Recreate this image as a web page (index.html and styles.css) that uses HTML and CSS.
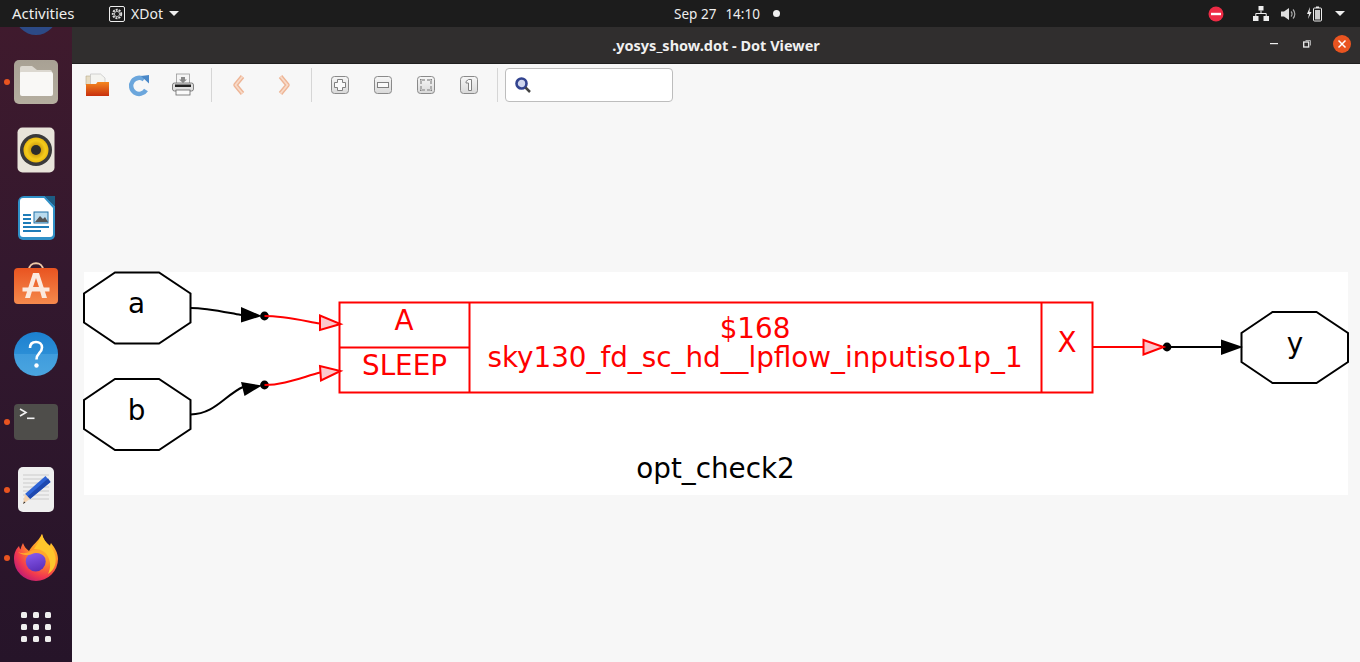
FILE: index.html
```html
<!DOCTYPE html>
<html lang="en">
<head>
<meta charset="utf-8">
<title>.yosys_show.dot - Dot Viewer</title>
<link rel="stylesheet" href="styles.css">
</head>
<body>
<header class="topbar">
  <div class="top-left">
    <span class="activities">Activities</span>
    <span class="appmenu">
      <svg class="appicon" viewBox="0 0 16 16" width="16" height="16"><rect x="0.5" y="0.5" width="15" height="15" rx="1.5" fill="none" stroke="#eee"/><circle cx="8" cy="8" r="4.2" fill="none" stroke="#ddd" stroke-width="2" stroke-dasharray="2 1"/><circle cx="8" cy="8" r="2.6" fill="none" stroke="#bbb"/></svg>
      <span>XDot</span>
      <svg viewBox="0 0 10 5" width="10" height="5"><path d="M0 0h10L5 5z" fill="#eee"/></svg>
    </span>
  </div>
  <div class="clock"><span>Sep 27</span><span>14:10</span><i class="clockdot"></i></div>
  <div class="tray">
    <svg class="tray-dnd" viewBox="0 0 16 16" width="16" height="16"><circle cx="8" cy="8" r="7.5" fill="#ed2b45"/><rect x="3" y="6.8" width="10" height="2.4" fill="#fff"/></svg>
    <svg class="tray-net" viewBox="0 0 16 15" width="16" height="15"><path d="M5.5 0h5v4.5h-5zM0 10h5.5v5H0zM10.5 10H16v5h-5.5z" fill="#eee"/><path d="M8 4.5V7.5M2.8 10V7.5H13.2V10" fill="none" stroke="#eee"/></svg>
    <svg class="tray-vol" viewBox="0 0 16 14" width="16" height="14"><path d="M0 4.5h3L8 1v12L3 9.5H0z" fill="#ddd"/><path d="M10 4.5a3.5 3.5 0 0 1 0 5M12 2.5a6.5 6.5 0 0 1 0 9" fill="none" stroke="#aaa" stroke-width="1.2"/></svg>
    <svg class="tray-bat" viewBox="0 0 15 16" width="15" height="16"><path d="M3 1L0 8h2L1 13l3.5-7H2.5z" fill="#eee"/><rect x="6.5" y="2" width="8" height="13" rx="1" fill="none" stroke="#eee"/><rect x="9" y="0.5" width="3" height="1.5" fill="#eee"/><rect x="8" y="4" width="5" height="9.5" fill="#ccc"/></svg>
    <svg class="tray-arrow" viewBox="0 0 10 5" width="10" height="5"><path d="M0 0h10L5 5z" fill="#eee"/></svg>
  </div>
</header>

<div class="desktop">
  <nav class="dock">
    <div class="dock-item">
      <svg viewBox="0 0 48 48" width="48" height="48"><circle cx="24" cy="24" r="21" fill="#2c4a86"/></svg>
    </div>
    <div class="dock-item running">
      <svg viewBox="0 0 48 48" width="48" height="48"><defs><linearGradient id="fold" x1="0" y1="0" x2="0" y2="1"><stop offset="0" stop-color="#a8a194"/><stop offset="1" stop-color="#b5ae9f"/></linearGradient></defs><rect x="2" y="2" width="44" height="44" rx="5" fill="url(#fold)"/><path d="M8 10a2 2 0 0 1 2-2h10l5 4h13a2 2 0 0 1 2 2v2H8z" fill="#dcd8d0"/><path d="M8 15a1 1 0 0 1 1-1h30a2 2 0 0 1 2 2v20a2 2 0 0 1-2 2H10a2 2 0 0 1-2-2z" fill="#f9f8f6"/></svg>
    </div>
    <div class="dock-item">
      <svg viewBox="0 0 48 48" width="48" height="48"><defs><radialGradient id="cone"><stop offset="0.3" stop-color="#c9970c"/><stop offset="0.75" stop-color="#f4cb1c"/><stop offset="1" stop-color="#eab90f"/></radialGradient></defs><rect x="5.500" y="1.500" width="37" height="45" rx="5" fill="#e8e4da"/><circle cx="24" cy="24" r="16" fill="#3a3a3a"/><circle cx="24" cy="24" r="12.5" fill="url(#cone)"/><circle cx="24" cy="24" r="5" fill="#2c2c2c"/></svg>
    </div>
    <div class="dock-item">
      <svg viewBox="0 0 48 48" width="48" height="48"><path d="M6 8a6 6 0 0 1 6-6h21l10 10v29a5 5 0 0 1-5 5H11a5 5 0 0 1-5-5z" fill="#2f90c7"/><path d="M8 7a3 3 0 0 1 3-3h21l9 10v26a3 3 0 0 1-3 3H11a3 3 0 0 1-3-3z" fill="#fff"/><path d="M33 2h10v10z" fill="#1d5c83"/><path d="M11 20h8v2h-8zM11 24h8v2h-8zM11 28h8v2h-8zM11 32h26v2H11zM11 36h18v2H11z" fill="#1e7cb8"/><rect x="22" y="18" width="14" height="11" fill="#b9dbee" stroke="#2073a8"/><path d="M23 28l5-6 3 3 2-2 3 5z" fill="#555"/></svg>
    </div>
    <div class="dock-item">
      <svg viewBox="0 0 48 48" width="48" height="48"><defs><linearGradient id="shop" x1="0" y1="0" x2="0" y2="1"><stop offset="0" stop-color="#e95420"/><stop offset="1" stop-color="#f58a4d"/></linearGradient></defs><path d="M17 8C17 -1 31 -1 31 8" fill="none" stroke="#f0c9a8" stroke-width="2"/><rect x="2" y="6" width="44" height="36" rx="4" fill="url(#shop)"/><path d="M21 11h6l8 25h-5l-2-7h-8l-2 7h-5zM24 16l-3 9h6z" fill="#fbe9df"/><rect x="10.500" y="25.500" width="27" height="4" fill="#fbe9df"/></svg>
    </div>
    <div class="dock-item">
      <svg viewBox="0 0 48 48" width="48" height="48"><defs><linearGradient id="help" x1="0" y1="0" x2="0" y2="1"><stop offset="0" stop-color="#1c80d0"/><stop offset="0.5" stop-color="#2b8ed6"/><stop offset="0.5" stop-color="#3f9cdd"/><stop offset="1" stop-color="#4aa5df"/></linearGradient></defs><circle cx="24" cy="24" r="22" fill="url(#help)"/><path d="M18 18c0-4 2.500-6 6-6s6 2 6 5.500c0 5.500-5.500 5.500-5.500 12" fill="none" stroke="#fff" stroke-width="2.600"/><circle cx="24.500" cy="35.500" r="2.200" fill="#fff"/></svg>
    </div>
    <div class="dock-item running">
      <svg viewBox="0 0 48 48" width="48" height="48"><rect x="2" y="6" width="44" height="36" rx="4" fill="#4e4d4a"/><path d="M8 11l6 3.500-6 3.500" fill="none" stroke="#f2f2f2" stroke-width="1.600"/><rect x="15" y="19.500" width="7.500" height="1.600" fill="#f2f2f2"/></svg>
    </div>
    <div class="dock-item running">
      <svg viewBox="0 0 48 48" width="48" height="48"><rect x="6" y="1" width="36" height="45" rx="5" fill="#efefef"/><path d="M11 9h26M11 13h26M11 17h26M11 21h26M11 25h26M11 29h26M11 33h26" stroke="#cbcbcb"/><path d="M33.500 10l5 6L18 33l-5-5z" fill="#2f64d6"/><path d="M36 12.500l2.500 3.500L18 33l-2.500-2.500z" fill="#1f49b0"/><path d="M13 28l5 5-7 5z" fill="#f4d3b0"/><path d="M12 35.500l-1 2.500 2.500-1.500z" fill="#333"/></svg>
    </div>
    <div class="dock-item running">
      <svg viewBox="0 0 48 48" width="48" height="48"><defs><radialGradient id="fx" cx="0.75" cy="0.2" r="0.95"><stop offset="0" stop-color="#ffd02b"/><stop offset="0.45" stop-color="#ff8a2a"/><stop offset="0.75" stop-color="#f2394f"/><stop offset="1" stop-color="#b5157c"/></radialGradient><linearGradient id="globe" x1="0.300" y1="0" x2="0.600" y2="1"><stop offset="0" stop-color="#8a5cf0"/><stop offset="1" stop-color="#5a2fb8"/></linearGradient></defs><path d="M2 25C2 19 4 15 7 12c.5 2 1 3 1.500 3.500C9 13 10 11 11 9c1 3 3 6 6 8 3-6 9-9 13-17 1 5 4 9 8 12 0-1 .5-2 1-3 4 5 7 10 7 16a22 22 0 0 1-44 0z" fill="url(#fx)"/><circle cx="23.700" cy="27.500" r="10" fill="url(#globe)"/><path d="M6 18c5 2 8 1 11 0 5-3 12-3 15 1 1.500 1.500 2 3 2 5-2-3-6-5-10-5-3 0-5 2-8 2-4 0-7-.500-10-3z" fill="#ffa52e"/><path d="M30 0c1 5 4 9 8 12 5 6 7 12 5 19-1 4-4 7-7 9 3-6 3-13-1-19-3-5-8-6-13-6 3-5 6-9 8-15z" fill="#ffc62c"/></svg>
    </div>
    <div class="dock-item">
      <svg class="dock-apps" viewBox="0 0 30 30" width="30" height="30" fill="#eeeded"><rect x="0" y="0" width="6" height="6" rx="1.500"/><rect x="12" y="0" width="6" height="6" rx="1.500"/><rect x="24" y="0" width="6" height="6" rx="1.500"/><rect x="0" y="12" width="6" height="6" rx="1.500"/><rect x="12" y="12" width="6" height="6" rx="1.500"/><rect x="24" y="12" width="6" height="6" rx="1.500"/><rect x="0" y="24" width="6" height="6" rx="1.500"/><rect x="12" y="24" width="6" height="6" rx="1.500"/><rect x="24" y="24" width="6" height="6" rx="1.500"/></svg>
    </div>
  </nav>

  <main class="window">
    <div class="titlebar">
      <span class="title">.yosys_show.dot - Dot Viewer</span>
      <div class="winbtns">
        <svg viewBox="0 0 8 2" width="8" height="2"><rect width="8" height="1.200" fill="#eee"/></svg>
        <svg viewBox="0 0 8 8" width="8" height="8"><path d="M2.500 0.500h5v5" fill="none" stroke="#aaa"/><rect x="0.700" y="2" width="5" height="5" fill="none" stroke="#eee" stroke-width="1.300"/></svg>
        <svg class="closebtn" viewBox="0 0 18 18" width="18" height="18"><circle cx="9" cy="9" r="9" fill="#e95420"/><path d="M5.500 5.500l7 7M12.500 5.500l-7 7" stroke="#fff" stroke-width="1.500"/></svg>
      </div>
    </div>

    <div class="toolbar">
      <button class="tool"><svg viewBox="0 0 24 24" width="24" height="24"><defs><linearGradient id="open" x1="0" y1="0" x2="0" y2="1"><stop offset="0" stop-color="#f5871f"/><stop offset="1" stop-color="#c8300e"/></linearGradient><linearGradient id="key" x1="0" y1="0" x2="0" y2="1"><stop offset="0" stop-color="#f7f7f7"/><stop offset="1" stop-color="#d9d9d9"/></linearGradient></defs><path d="M1 3h8v9H1z" fill="#e6dcc4" stroke="#b8ab8a" stroke-width="0.600"/><path d="M5.500 1h10l4.500 4v8H5.500z" fill="#f4f4f0" stroke="#bbb" stroke-width="0.600"/><path d="M1 11h10l1.500-2H24v14H1z" fill="url(#open)"/></svg></button>
      <button class="tool"><svg viewBox="0 0 24 24" width="24" height="24"><path d="M16 6.500A8 8 0 1 0 18 17" fill="none" stroke="#6ba6dc" stroke-width="4.500"/><path d="M13 3l8-1v8.500z" fill="#4a88c8"/></svg></button>
      <button class="tool"><svg viewBox="0 0 24 24" width="24" height="24"><rect x="5.500" y="1" width="13" height="10" fill="#f5f5f5" stroke="#999" stroke-width="0.800"/><path d="M10 4h4v2.500h2l-4 3.500-4-3.500h2z" fill="#888"/><rect x="1.500" y="10" width="21" height="8" rx="2" fill="#e0e0e0" stroke="#666" stroke-width="0.800"/><rect x="4" y="11.500" width="16" height="2.500" fill="#222"/><rect x="5" y="17" width="14" height="5" fill="#fafafa" stroke="#666" stroke-width="0.800"/></svg></button>
      <i class="sep sep-a"></i>
      <button class="tool"><svg viewBox="0 0 24 24" width="24" height="24"><path d="M15.500 3.500L8.500 12l7 8.500" fill="none" stroke="#eeb596" stroke-width="4.500" stroke-linejoin="round"/><path d="M15.500 3.500L8.500 12l7 8.500" fill="none" stroke="#f8dac8" stroke-width="1.800"/></svg></button>
      <button class="tool tool-next"><svg viewBox="0 0 24 24" width="24" height="24"><path d="M8.500 3.500L15.500 12l-7 8.500" fill="none" stroke="#eeb596" stroke-width="4.500" stroke-linejoin="round"/><path d="M8.500 3.500L15.500 12l-7 8.500" fill="none" stroke="#f8dac8" stroke-width="1.800"/></svg></button>
      <i class="sep sep-b"></i>
      <button class="tool"><svg viewBox="0 0 24 24" width="24" height="24"><rect x="3.500" y="3.500" width="17" height="17" rx="3" fill="url(#key)" stroke="#8a8a8a"/><path d="M9.500 6.500h5v3h3v5h-3v3h-5v-3h-3v-5h3z" fill="#fafafa" stroke="#808080"/></svg></button>
      <button class="tool"><svg viewBox="0 0 24 24" width="24" height="24"><rect x="3.500" y="3.500" width="17" height="17" rx="3" fill="url(#key)" stroke="#8a8a8a"/><rect x="6.500" y="9.500" width="11" height="5" fill="#fafafa" stroke="#808080"/></svg></button>
      <button class="tool"><svg viewBox="0 0 24 24" width="24" height="24"><rect x="3.500" y="3.500" width="17" height="17" rx="3" fill="url(#key)" stroke="#8a8a8a"/><path d="M7 11V7h4M13 7h4v4M17 13v4h-4M11 17H7v-4" fill="none" stroke="#808080" stroke-width="2"/><path d="M7 11V7h4M13 7h4v4M17 13v4h-4M11 17H7v-4" fill="none" stroke="#f4f4f4" stroke-width="0.800"/></svg></button>
      <button class="tool"><svg viewBox="0 0 24 24" width="24" height="24"><rect x="3.500" y="3.500" width="17" height="17" rx="3" fill="url(#key)" stroke="#8a8a8a"/><path d="M11.500 6.500h3v11h-3v-7.500h-2.500v-1.500z" fill="#fafafa" stroke="#808080"/></svg></button>
      <i class="sep sep-c"></i>
      <div class="search"><svg viewBox="0 0 18 18" width="18" height="18"><circle cx="7.500" cy="7.500" r="5" fill="#cfd6ee" stroke="#32438f" stroke-width="2.600"/><path d="M11.500 11.500l4.500 4.500" stroke="#444" stroke-width="2.500"/></svg></div>
    </div>

    <div class="viewport">
      <svg class="graph" viewBox="84 272 1264 223" width="1264" height="223">
        <rect x="84" y="272" width="1264" height="223" fill="#fff"/>
        <g class="node">
          <polygon points="115,272.500 159,272.500 190.500,293.500 190.500,322.500 159,343.500 115,343.500 84,322.500 84,293.500"/>
          <polygon points="115,379 159,379 190.500,400 190.500,429 159,450 115,450 84,429 84,400"/>
          <polygon points="1272.500,312 1316.500,312 1348,333 1348,362 1316.500,383 1272.500,383 1241.500,362 1241.500,333"/>
        </g>
        <g class="edge-black">
          <path d="M190.500 308C207 308 224 312 241 315"/>
          <path d="M190.500 414.500C215 414 225 395 243 387"/>
          <path d="M1167 347H1221"/>
        </g>
        <g class="head-black">
          <polygon points="241,307 241,322.500 262,316"/>
          <polygon points="241,382 244.500,396 262,385.500"/>
          <polygon points="1221,339.500 1221,355 1243,347"/>
          <circle cx="264.500" cy="316" r="4.400"/>
          <circle cx="264.500" cy="385" r="4.400"/>
          <circle cx="1167" cy="347" r="4.400"/>
        </g>
        <g class="edge-red">
          <path d="M264.500 316C283 316 300 320 320 323.500"/>
          <path d="M264.500 385C283 385 300 378 320 372.500"/>
          <path d="M1092.500 347H1143.500"/>
        </g>
        <g class="head-red">
          <polygon points="320,315.500 320,330 340.500,324"/>
          <polygon points="320,366 321,380.500 340.500,371"/>
          <polygon points="1143.500,340 1143.500,354.500 1163.500,347"/>
        </g>
        <g class="cellbox">
          <rect x="339.500" y="302.500" width="753" height="90"/>
          <path d="M469.500 302.500V392.500M1041.500 302.500V392.500M339.500 347.500H469.500"/>
        </g>
        <g class="label-red">
          <text x="404" y="330">A</text>
          <text x="404.500" y="375">SLEEP</text>
          <text x="755" y="338">$168</text>
          <text x="755" y="367">sky130_fd_sc_hd__lpflow_inputiso1p_1</text>
          <text x="1067" y="352">X</text>
        </g>
        <g class="label-black">
          <text x="136.500" y="313">a</text>
          <text x="136.500" y="420">b</text>
          <text x="1295" y="353">y</text>
          <text x="715.500" y="478">opt_check2</text>
        </g>
      </svg>
    </div>
  </main>
</div>
</body>
</html>
```
FILE: styles.css
```css
* { box-sizing: border-box; }
html, body { margin: 0; height: 100%; overflow: hidden; }
body { display: flex; flex-direction: column; width: 1360px; height: 662px; font-family: "Noto Sans", "Open Sans", sans-serif; background: #f7f7f7; }

.topbar { height: 27px; flex: none; background: #1c1c1c; color: #eee; font-size: 14px; display: grid; grid-template-columns: 1fr auto 1fr; align-items: center; z-index: 2; }
.top-left { display: flex; align-items: center; padding-left: 12px; }
.activities { width: 97px; font-size: 15px; padding-bottom: 2px; }
.appmenu { display: flex; align-items: center; gap: 6px; }
.clock { display: flex; align-items: center; gap: 9px; font-size: 13.500px; margin-left: 94px; }
.clockdot { width: 7px; height: 7px; border-radius: 50%; background: #f0f0f0; margin-left: 4px; }
.tray { display: flex; align-items: center; justify-content: flex-end; padding-right: 15px; }
.tray-dnd { margin-right: 29px; }
.tray-net { margin-right: 12px; }
.tray-vol { margin-right: 10px; }
.tray-bat { margin-right: 13px; }

.desktop { flex: 1; display: flex; min-height: 0; }
.dock { width: 72px; flex: none; overflow: hidden; background: linear-gradient(180deg, #3f1a2d 0%, #33182e 40%, #261429 100%); display: flex; flex-direction: column; }
.dock-item { height: 68px; flex: none; display: flex; align-items: center; justify-content: center; position: relative; }
.dock-item:first-child { margin-top: -47px; }
.dock-apps { margin-top: 2px; }
.running::before { content: ""; position: absolute; left: 4px; top: 31px; width: 6px; height: 6px; border-radius: 50%; background: #e95420; }

.window { flex: 1; display: flex; flex-direction: column; min-width: 0; }
.titlebar { height: 37px; flex: none; background: #302e2e; color: #f0f0f0; position: relative; display: flex; align-items: center; justify-content: center; border-bottom: 1px solid #1f1f1f; }
.title { font-size: 14.500px; font-weight: 700; }
.winbtns { position: absolute; right: 9px; top: 8px; height: 18px; display: flex; align-items: center; gap: 25px; }
.closebtn { margin-left: -3px; }

.toolbar { height: 46px; flex: none; display: flex; align-items: flex-start; padding: 4px 0 0 3px; background: #f7f7f7; }
.tool { width: 43px; height: 34px; border: 0; padding: 0; background: none; display: flex; align-items: center; justify-content: center; }
.tool-next { margin-left: 2px; }
.sep { width: 1px; height: 34px; background: #d6d6d6; flex: none; }
.sep-a { margin: 0 5px 0 7px; }
.sep-b { margin: 0 6px 0 6px; }
.sep-c { margin: 0 7px 0 7px; }
.search { width: 168px; height: 34px; background: #fff; border: 1px solid #bdbdbd; border-radius: 4px; display: flex; align-items: center; padding-left: 8px; }

.viewport { flex: 1; padding: 162px 0 0 12px; background: #f7f7f7; }
.graph { display: block; overflow: visible; font-family: "DejaVu Sans", sans-serif; font-size: 27.800px; }
.node polygon { fill: #fff; stroke: #000; stroke-width: 2; }
.edge-black path { fill: none; stroke: #000; stroke-width: 2; }
.head-black * { fill: #000; }
.edge-red path { fill: none; stroke: #f00; stroke-width: 2; }
.head-red polygon { fill: #fcc8cc; stroke: #f00; stroke-width: 2; }
.cellbox rect, .cellbox path { fill: none; stroke: #f00; stroke-width: 2; }
.label-red text { fill: #f00; text-anchor: middle; }
.label-black text { fill: #000; text-anchor: middle; }
```
